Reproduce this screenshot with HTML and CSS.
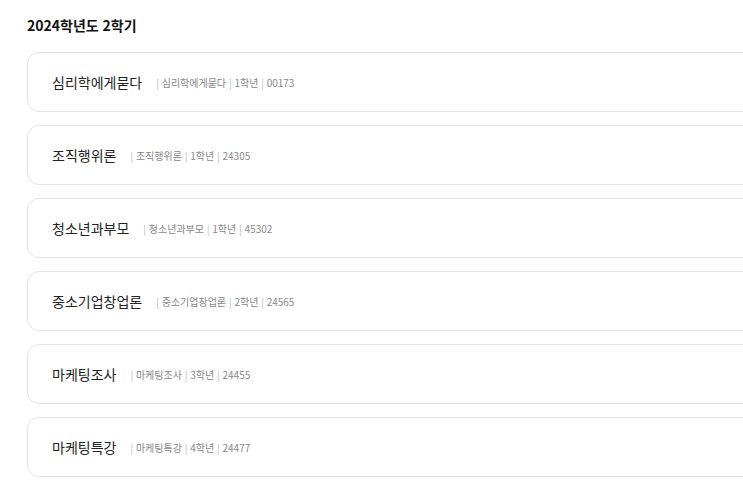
FILE: index.html
```html
<!DOCTYPE html>
<html lang="ko">
<head>
    <meta charset="UTF-8">
    <meta name="viewport" content="width=device-width, initial-scale=1.0">
    <title>2024학년도 2학기</title>
    <link rel="stylesheet" href="styles.css">
</head>
<body>

    <h2 class="term">2024학년도 2학기</h2>

    <div class="course-list">
        <div class="course">
            <span class="course-name">심리학에게묻다</span>
            <span class="course-meta"><i>|</i> 심리학에게묻다 <i>|</i> 1학년 <i>|</i> 00173</span>
        </div>
        <div class="course">
            <span class="course-name">조직행위론</span>
            <span class="course-meta"><i>|</i> 조직행위론 <i>|</i> 1학년 <i>|</i> 24305</span>
        </div>
        <div class="course">
            <span class="course-name">청소년과부모</span>
            <span class="course-meta"><i>|</i> 청소년과부모 <i>|</i> 1학년 <i>|</i> 45302</span>
        </div>
        <div class="course">
            <span class="course-name">중소기업창업론</span>
            <span class="course-meta"><i>|</i> 중소기업창업론 <i>|</i> 2학년 <i>|</i> 24565</span>
        </div>
        <div class="course">
            <span class="course-name">마케팅조사</span>
            <span class="course-meta"><i>|</i> 마케팅조사 <i>|</i> 3학년 <i>|</i> 24455</span>
        </div>
        <div class="course">
            <span class="course-name">마케팅특강</span>
            <span class="course-meta"><i>|</i> 마케팅특강 <i>|</i> 4학년 <i>|</i> 24477</span>
        </div>
    </div>

</body>
</html>
```

FILE: styles.css
```css
body {
    font-family: "Noto Sans CJK KR", "Noto Sans", sans-serif;
    background-color: #fff;
    color: #222;
    margin: 0;
    padding: 14px 0 0 27px;
    overflow: hidden;
}

.term {
    font-size: 14px;
    font-weight: 700;
    margin: 0 0 16px 0;
    line-height: 22px;
    color: #111;
}

.course-list {
    display: flex;
    flex-direction: column;
    gap: 13px;
    width: 760px;
}

.course {
    display: flex;
    align-items: center;
    height: 58px;
    padding: 0 24px;
    border: 1px solid #e4e4e4;
    border-radius: 12px;
    background-color: #fff;
}

.course-name {
    font-size: 14px;
    color: #222;
    margin-right: 14px;
}

.course-meta {
    font-size: 10px;
    color: #888;
}

.course-meta i {
    font-style: normal;
    color: #bbb;
}
```
